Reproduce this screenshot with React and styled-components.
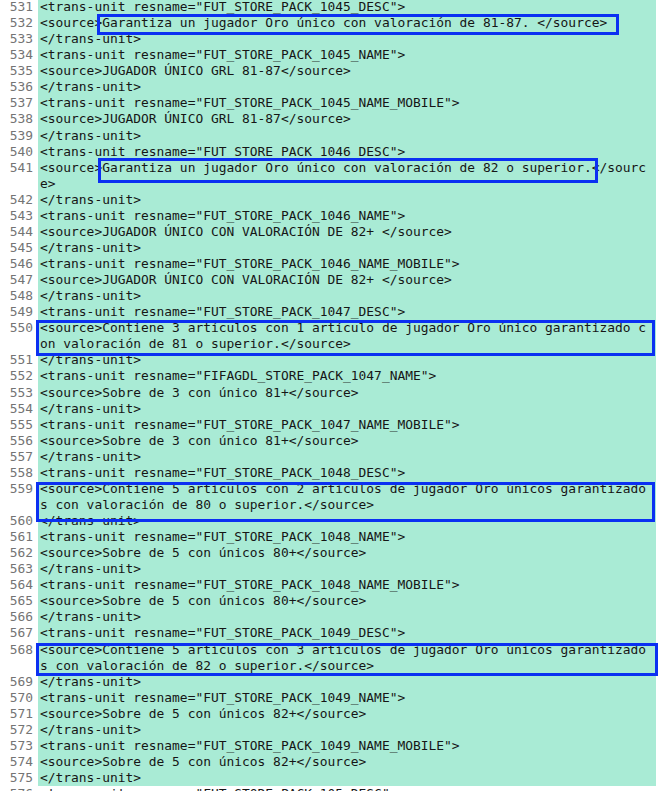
import React from 'react';
import styled, { createGlobalStyle } from 'styled-components';

const Global = createGlobalStyle`
  html, body {
    margin: 0;
    padding: 0;
    background: #ffffff;
    overflow: hidden;
  }
`

const Page = styled.div`
  width: 670px;
  height: 792px;
  overflow: hidden;
  font-family: "DejaVu Sans Mono", "Liberation Mono", monospace;
  font-size: 12.92px;
  line-height: 16.06px;
  color: #161616;
  margin-top: -1px;
`

const Row = styled.div`
  display: grid;
  grid-template-columns: 38px 618px;
`

const Num = styled.div`
  text-align: right;
  padding-right: 5px;
  color: #747474;
`

const Code = styled.div`
  position: relative;
  background: ${p => (p.$added ? '#a9ebd5' : 'transparent')};
  padding: 0 6px 0 2px;
  white-space: pre-wrap;
  word-break: break-all;
`

const Mark = styled.div`
  position: absolute;
  z-index: 2;
  box-sizing: border-box;
  border: 3px solid #0b30f2;
  pointer-events: none;
`

const lines = [
  [531, '<trans-unit resname="FUT_STORE_PACK_1045_DESC">'],
  [532, '<source>Garantiza un jugador Oro único con valoración de 81-87. </source>', { left: 59, top: -1, width: 522, height: 21 }],
  [533, '</trans-unit>'],
  [534, '<trans-unit resname="FUT_STORE_PACK_1045_NAME">'],
  [535, '<source>JUGADOR ÚNICO GRL 81-87</source>'],
  [536, '</trans-unit>'],
  [537, '<trans-unit resname="FUT_STORE_PACK_1045_NAME_MOBILE">'],
  [538, '<source>JUGADOR ÚNICO GRL 81-87</source>'],
  [539, '</trans-unit>'],
  [540, '<trans-unit resname="FUT_STORE_PACK_1046_DESC">'],
  [541, '<source>Garantiza un jugador Oro único con valoración de 82 o superior.</source>', { left: 60, top: -2, width: 500, height: 25 }],
  [542, '</trans-unit>'],
  [543, '<trans-unit resname="FUT_STORE_PACK_1046_NAME">'],
  [544, '<source>JUGADOR ÚNICO CON VALORACIÓN DE 82+ </source>'],
  [545, '</trans-unit>'],
  [546, '<trans-unit resname="FUT_STORE_PACK_1046_NAME_MOBILE">'],
  [547, '<source>JUGADOR ÚNICO CON VALORACIÓN DE 82+ </source>'],
  [548, '</trans-unit>'],
  [549, '<trans-unit resname="FUT_STORE_PACK_1047_DESC">'],
  [550, '<source>Contiene 3 artículos con 1 artículo de jugador Oro único garantizado con valoración de 81 o superior.</source>', { left: -2, top: 0, width: 619, height: 36 }],
  [551, '</trans-unit>'],
  [552, '<trans-unit resname="FIFAGDL_STORE_PACK_1047_NAME">'],
  [553, '<source>Sobre de 3 con único 81+</source>'],
  [554, '</trans-unit>'],
  [555, '<trans-unit resname="FUT_STORE_PACK_1047_NAME_MOBILE">'],
  [556, '<source>Sobre de 3 con único 81+</source>'],
  [557, '</trans-unit>'],
  [558, '<trans-unit resname="FUT_STORE_PACK_1048_DESC">'],
  [559, '<source>Contiene 5 articulos con 2 articulos de jugador Oro únicos garantizados con valoración de 80 o superior.</source>', { left: -2, top: 1, width: 619, height: 40 }],
  [560, '</trans-unit>'],
  [561, '<trans-unit resname="FUT_STORE_PACK_1048_NAME">'],
  [562, '<source>Sobre de 5 con únicos 80+</source>'],
  [563, '</trans-unit>'],
  [564, '<trans-unit resname="FUT_STORE_PACK_1048_NAME_MOBILE">'],
  [565, '<source>Sobre de 5 con únicos 80+</source>'],
  [566, '</trans-unit>'],
  [567, '<trans-unit resname="FUT_STORE_PACK_1049_DESC">'],
  [568, '<source>Contiene 5 artículos con 3 artículos de jugador Oro únicos garantizados con valoración de 82 o superior.</source>', { left: -2, top: 1, width: 622, height: 33 }],
  [569, '</trans-unit>'],
  [570, '<trans-unit resname="FUT_STORE_PACK_1049_NAME">'],
  [571, '<source>Sobre de 5 con únicos 82+</source>'],
  [572, '</trans-unit>'],
  [573, '<trans-unit resname="FUT_STORE_PACK_1049_NAME_MOBILE">'],
  [574, '<source>Sobre de 5 con únicos 82+</source>'],
  [575, '</trans-unit>'],
]

const App = () => {
  return (
    <Page>
      <Global />
      {lines.map(([n, text, mark]) => (
        <Row key={n}>
          <Num>{n}</Num>
          <Code $added>
            {text}
            {mark && <Mark style={mark} />}
          </Code>
        </Row>
      ))}
      <Row>
        <Num>576</Num>
        <Code>{'<trans-unit resname="FUT_STORE_PACK_105_DESC">'}</Code>
      </Row>
    </Page>
  )
}

export default App
